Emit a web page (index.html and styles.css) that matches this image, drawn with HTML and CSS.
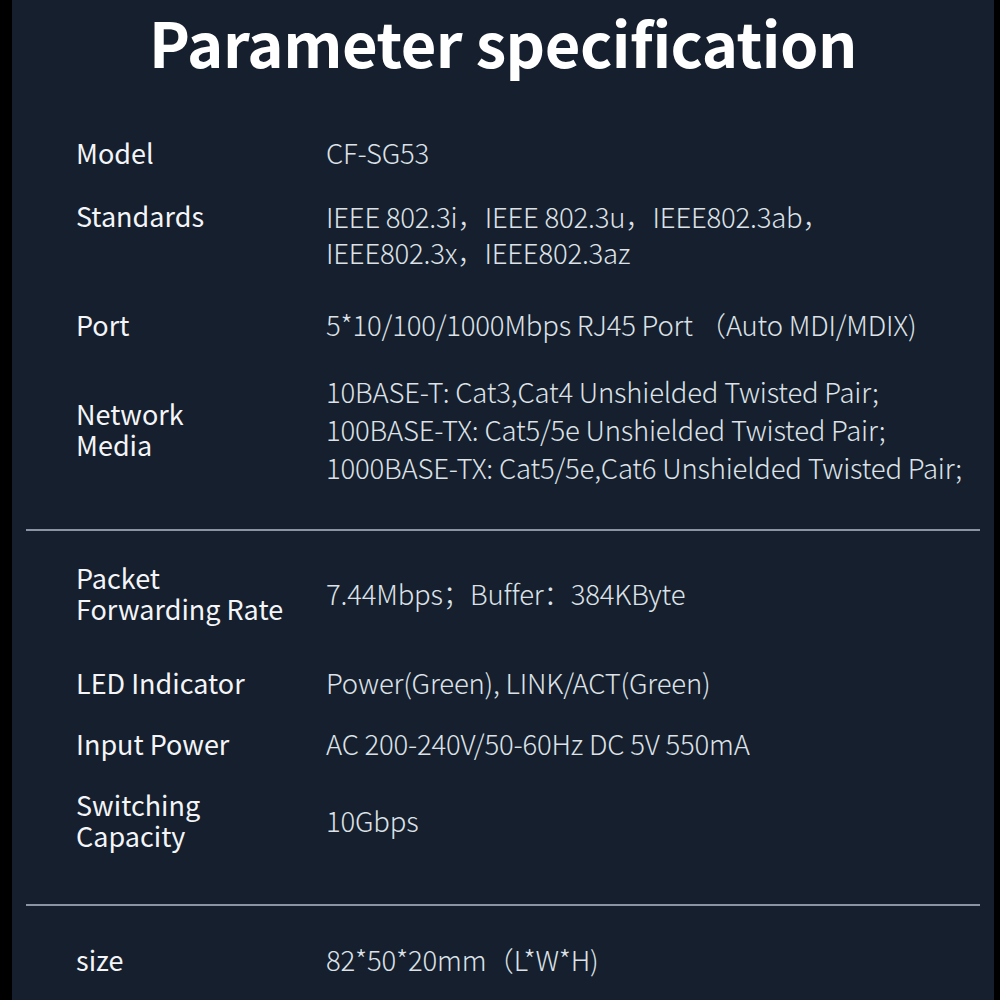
FILE: index.html
```html
<!DOCTYPE html>
<html lang="en">
<head>
    <meta charset="UTF-8">
    <title>Parameter specification</title>
    <link rel="stylesheet" href="styles.css">
</head>
<body>
    <div class="sheet">
        <h1 class="title">Parameter specification</h1>

        <!-- basic -->
        <div class="group group-first">
            <div class="row row-model">
                <div class="label">Model</div>
                <div class="value">CF-SG53</div>
            </div>
            <div class="row row-top row-standards">
                <div class="label">Standards</div>
                <div class="value">IEEE 802.3i，IEEE 802.3u，IEEE802.3ab，<br>IEEE802.3x，IEEE802.3az</div>
            </div>
            <div class="row row-port">
                <div class="label">Port</div>
                <div class="value">5*10/100/1000Mbps RJ45 Port （Auto MDI/MDIX)</div>
            </div>
            <div class="row row-media">
                <div class="label">Network<br>Media</div>
                <div class="value value-tall">10BASE-T: Cat3,Cat4 Unshielded Twisted Pair;<br>100BASE-TX: Cat5/5e Unshielded Twisted Pair;<br>1000BASE-TX: Cat5/5e,Cat6 Unshielded Twisted Pair;</div>
            </div>
        </div>

        <div class="divider"></div>

        <!-- performance -->
        <div class="group group-second">
            <div class="row row-packet">
                <div class="label">Packet<br>Forwarding Rate</div>
                <div class="value">7.44Mbps；Buffer：384KByte</div>
            </div>
            <div class="row row-led">
                <div class="label">LED Indicator</div>
                <div class="value">Power(Green), LINK/ACT(Green)</div>
            </div>
            <div class="row row-power">
                <div class="label">Input Power</div>
                <div class="value">AC 200-240V/50-60Hz DC 5V 550mA</div>
            </div>
            <div class="row row-switch">
                <div class="label">Switching<br>Capacity</div>
                <div class="value">10Gbps</div>
            </div>
        </div>

        <div class="divider"></div>

        <!-- size -->
        <div class="group group-last">
            <div class="row">
                <div class="label">size</div>
                <div class="value">82*50*20mm（L*W*H)</div>
            </div>
        </div>
    </div>
</body>
</html>
```

FILE: styles.css
```css
:root {
    --bg: #161f2d;
    --label-color: #f3f5f8;
    --value-color: #dde2e8;
    --line-color: #8995a4;
}

* {
    box-sizing: border-box;
}

body {
    margin: 0;
    background: #000;
    font-family: 'Noto Sans CJK SC', 'Noto Sans', sans-serif;
}

.sheet {
    margin-left: 12px;
    width: 982px;
    height: 1000px;
    background: var(--bg);
    overflow: hidden;
}

.title {
    margin: 0;
    height: 96px;
    text-align: center;
    color: #fff;
    font-size: 61.5px;
    font-weight: 700;
    line-height: 84px;
    letter-spacing: -0.5px;
}

.group {
    display: flex;
    flex-direction: column;
    padding-left: 64px;
}

.group-first {
    padding-top: 38px;
    gap: 27px;
}

.group-second {
    padding-top: 31px;
}

.group-last {
    padding-top: 35px;
}

.row {
    display: flex;
    align-items: center;
}

.row-top {
    align-items: flex-start;
}

.row-port {
    margin-top: 9px;
}

.row-media {
    margin-top: 2px;
}

.row-led {
    margin-top: 40px;
}

.row-power {
    margin-top: 24px;
}

.row-switch {
    margin-top: 27px;
}

.label {
    width: 250px;
    flex-shrink: 0;
    color: var(--label-color);
    font-size: 27px;
    font-weight: 400;
    line-height: 31px;
}

.value {
    color: var(--value-color);
    font-size: 27.5px;
    font-weight: 300;
    line-height: 37px;
    letter-spacing: -0.2px;
    white-space: nowrap;
}

.row-standards .value {
    line-height: 36px;
}

.value-tall {
    line-height: 38px;
}

.row-top .label {
    line-height: 36px;
}

.divider {
    margin: 0 14px;
    height: 2px;
    background: var(--line-color);
}

.group-first + .divider {
    margin-top: 43px;
}

.group-second + .divider {
    margin-top: 53px;
}
```
